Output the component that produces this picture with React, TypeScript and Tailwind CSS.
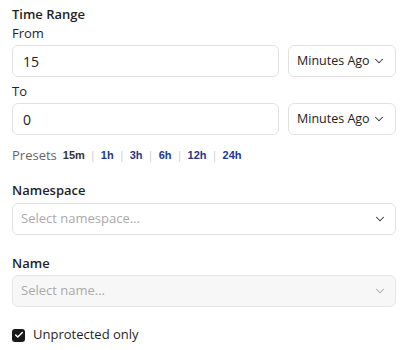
import { ChevronDown, Check } from "lucide-react";

const presets = ["15m", "1h", "3h", "6h", "12h", "24h"];

function TimeRow({ value }: { value: string }) {
  return (
    <div className="flex gap-[9px]">
      <div className="flex-1 h-8 rounded-md border border-[#e2e2e2] bg-white px-[10px] flex items-center text-[14px] text-[#222]">
        {value}
      </div>
      <div className="w-[108px] shrink-0 h-8 rounded-md border border-[#e2e2e2] bg-white pl-[8px] pr-[9px] flex items-center justify-between text-[12.5px] text-[#222] whitespace-nowrap">
        <span>Minutes Ago</span>
        <ChevronDown className="w-[14px] h-[14px] text-[#333] shrink-0" strokeWidth={1.8} />
      </div>
    </div>
  );
}

export default function App() {
  return (
    <div className="w-[411px] h-[350px] bg-white pl-3 pr-[15px] pt-[6px] font-['Open_Sans',sans-serif] text-[#1f1f1f]">
      {/* Time range */}
      <div className="text-[13px] font-semibold leading-4">Time Range</div>
      <div className="mt-[1px] text-[13px] leading-5">From</div>
      <div className="mt-[2px]">
        <TimeRow value="15" />
      </div>
      <div className="mt-[4px] text-[13px] leading-5">To</div>
      <div className="mt-[2px]">
        <TimeRow value="0" />
      </div>

      {/* Presets */}
      <div className="mt-[12px] h-4 flex items-center leading-4">
        <span className="text-[#666] text-[13px] mr-[6px]">Presets</span>
        {presets.map((p, i) => (
          <span key={p} className="flex items-center">
            {i > 0 && <span className="text-[#ccc] mx-[5px] text-[11px]">|</span>}
            <span className={`font-bold text-[11px] font-['Liberation_Sans',sans-serif] ${i === 0 ? "text-[#333]" : "text-[#1e3a8a]"}`}>{p}</span>
          </span>
        ))}
      </div>

      {/* Namespace */}
      <div className="mt-[17px] text-[13px] font-semibold leading-5">Namespace</div>
      <div className="mt-[3px] h-8 rounded-md border border-[#e2e2e2] bg-white pl-[8px] pr-[8px] flex items-center justify-between text-[13px]">
        <span className="text-[#aaa]">Select namespace...</span>
        <ChevronDown className="w-[14px] h-[14px] text-[#333]" strokeWidth={1.8} />
      </div>

      {/* Name */}
      <div className="mt-[18px] text-[13px] font-semibold leading-5">Name</div>
      <div className="mt-[2px] h-8 rounded-md border border-[#e6e6e6] bg-[#f7f7f7] pl-[8px] pr-[8px] flex items-center justify-between text-[13px]">
        <span className="text-[#aaa]">Select name...</span>
        <ChevronDown className="w-[14px] h-[14px] text-[#aaa]" strokeWidth={1.8} />
      </div>

      {/* Checkbox */}
      <label className="mt-[18px] h-5 flex items-center gap-[8px]">
        <span className="w-[13px] h-[13px] rounded-[3px] bg-[#1a1a1a] flex items-center justify-center">
          <Check className="w-[10px] h-[10px] text-white" strokeWidth={3.5} />
        </span>
        <span className="text-[13px] font-medium">Unprotected only</span>
      </label>
    </div>
  );
}
